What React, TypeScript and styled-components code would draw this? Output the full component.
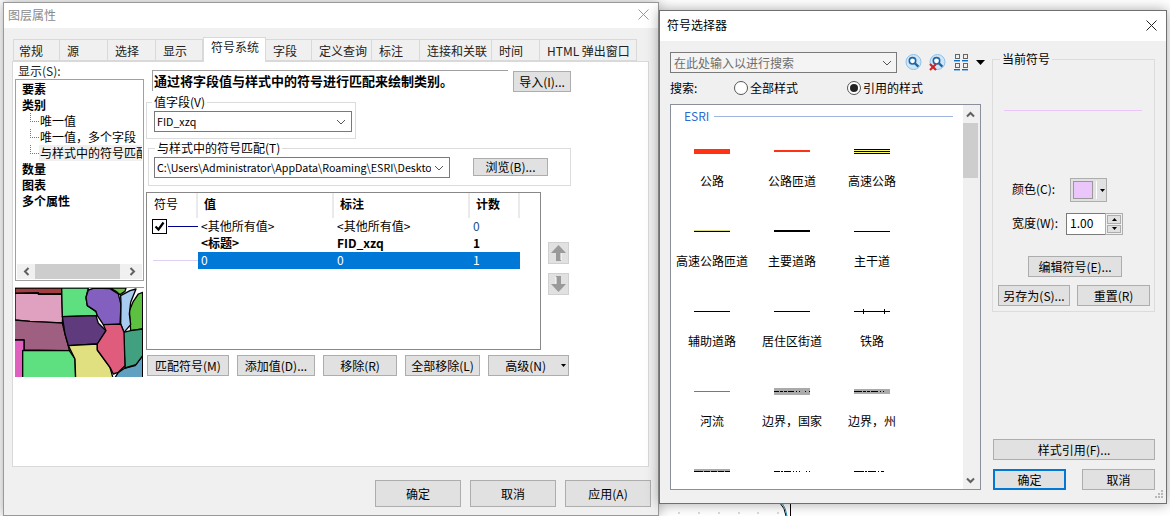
import React from "react";
import styled, { createGlobalStyle } from "styled-components";

// ---------------- Sample Data ----------------
const tabs = [
  { label: "常规", w: 47 },
  { label: "源", w: 48 },
  { label: "选择", w: 48 },
  { label: "显示", w: 47 },
  { label: "符号系统", w: 63, active: true },
  { label: "字段", w: 46 },
  { label: "定义查询", w: 60 },
  { label: "标注", w: 48 },
  { label: "连接和关联", w: 72 },
  { label: "时间", w: 48 },
  { label: "HTML 弹出窗口", w: 97 },
];

type Stroke = { y: number; h: number; color: string; dash?: string };

const symbols: { label: string; strokes: Stroke[]; ticks?: boolean }[] = [
  { label: "公路", strokes: [{ y: 4, h: 5, color: "#ff3314" }] },
  { label: "公路匝道", strokes: [{ y: 5, h: 2, color: "#ff3314" }] },
  {
    label: "高速公路",
    strokes: [
      { y: 4, h: 5, color: "#000" },
      { y: 5, h: 1, color: "#ffff66" },
      { y: 7, h: 1, color: "#ffff66" },
    ],
  },
  {
    label: "高速公路匝道",
    strokes: [
      { y: 5, h: 1, color: "#dddd80" },
      { y: 6, h: 1, color: "#000" },
    ],
  },
  { label: "主要道路", strokes: [{ y: 5, h: 2, color: "#000" }] },
  { label: "主干道", strokes: [{ y: 6, h: 1, color: "#000" }] },
  { label: "辅助道路", strokes: [{ y: 6, h: 1, color: "#000" }] },
  { label: "居住区街道", strokes: [{ y: 6, h: 1, color: "#000" }] },
  { label: "铁路", strokes: [{ y: 6, h: 1, color: "#000" }], ticks: true },
  { label: "河流", strokes: [{ y: 6, h: 1, color: "#2090f0" }] },
  {
    label: "边界，国家",
    strokes: [
      { y: 3, h: 7, color: "#aaa" },
      { y: 6, h: 1, color: "#000", dash: "5 1 3 1 3 1 6 2 1 2 1" },
    ],
  },
  {
    label: "边界，州",
    strokes: [
      { y: 4, h: 5, color: "#aaa" },
      { y: 6, h: 1, color: "#000", dash: "8 1 3 1 3 1 7 2 1 2 1" },
    ],
  },
  {
    label: "",
    strokes: [
      { y: 4, h: 3, color: "#aaa" },
      { y: 6, h: 1, color: "#000", dash: "9 1 6 1 6 1 6 1" },
    ],
  },
  { label: "", strokes: [{ y: 6, h: 1, color: "#000", dash: "6 1 2 1 7 2 1 2 1 2 1" }] },
  { label: "", strokes: [{ y: 6, h: 1, color: "#000", dash: "10 1 2 1 8 2 1 2 3" }] },
];

const regions = [
  { fill: "#6cbf40", d: "300,22 348,22 345,32 330,42 318,32" },
  { fill: "#a23d41", d: "15,22 155,22 155,40 85,40 85,37 15,38" },
  { fill: "#e0a0c0", d: "15,38 85,37 85,41 155,40 158,108 157,127 120,125 60,122 15,118" },
  { fill: "#5ee080", d: "155,22 235,22 228,50 232,75 258,92 262,105 157,108" },
  { fill: "#8360c0", d: "235,28 252,22 300,24 325,40 333,72 330,132 280,132 262,105 258,92 232,75 228,50" },
  { fill: "#5cc040", d: "385,40 398,35 398,145 362,150 358,90 370,62" },
  { fill: "#a8ccf0", d: "332,45 360,30 378,25 362,65 358,100 362,132 342,155 332,130 333,72" },
  { fill: "#9e5f80", d: "10,118 60,122 120,125 157,127 165,160 175,195 178,210 42,208 42,178 10,178" },
  { fill: "#5f3b7e", d: "157,108 258,105 265,128 288,150 262,190 175,195 165,160" },
  { fill: "#e060c0", d: "10,178 42,178 42,208 38,210 38,296 10,296" },
  { fill: "#60a0c0", d: "345,262 375,255 398,225 398,291 315,291 325,275" },
  { fill: "#40a080", d: "340,155 362,150 398,145 398,225 378,252 345,262" },
  { fill: "#5ee080", d: "38,210 178,210 195,235 197,296 38,296" },
  { fill: "#e0e080", d: "175,195 262,190 262,208 300,260 310,296 197,296 195,235" },
  { fill: "#e05c7c", d: "280,132 332,130 342,155 345,255 325,275 310,280 300,260 262,208 262,190 288,150" },
];

// ---------------- Small Drawings ----------------
const Chevron = () => (
  <svg width="10" height="6" viewBox="0 0 10 6" style={{ flex: "none" }}>
    <polyline points="1,1 5,5 9,1" fill="none" stroke="#555" strokeWidth="1" />
  </svg>
);

const ScrollArrow = ({ turn }: { turn: number }) => (
  <svg width="9" height="9" viewBox="0 0 9 9" style={{ transform: `rotate(${turn}deg)` }}>
    <polyline points="1,6.5 4.5,3 8,6.5" fill="none" stroke="#606060" strokeWidth="2" />
  </svg>
);

const Caret = ({ size = 5 }: { size?: number }) => (
  <svg width={size} height={Math.ceil(size / 2)} viewBox="0 0 2 1" preserveAspectRatio="none">
    <polygon points="0,0 2,0 1,1" fill="#000" />
  </svg>
);

const MoveArrow = ({ down }: { down?: boolean }) => (
  <svg width="15" height="16" viewBox="0 0 15 16" style={{ transform: down ? "rotate(180deg)" : undefined }}>
    <polygon points="7.5,0 15,8 10,8 10,16 5,16 5,8 0,8" fill="#9a9a9a" />
    <polyline points="10,8 10,15" stroke="#fff" fill="none" />
  </svg>
);

const SearchIcon = ({ clear }: { clear?: boolean }) => (
  <svg width="17" height="17" viewBox="0 0 17 17">
    <circle cx="8.5" cy="8" r="7.5" fill="#cfe6f7" stroke="#8fc0e4" />
    <circle cx="7.5" cy="6.8" r="3.2" fill="#fff" stroke="#1b66a8" strokeWidth="1.6" />
    <line x1="10" y1="9.4" x2="13.4" y2="12.6" stroke="#1b66a8" strokeWidth="2.2" />
    {clear && (
      <g stroke="#c8282c" strokeWidth="2.2">
        <line x1="1" y1="10" x2="7" y2="16" />
        <line x1="7" y1="10" x2="1" y2="16" />
      </g>
    )}
  </svg>
);

const GridIcon = () => (
  <svg width="16" height="17" viewBox="0 0 16 17">
    <g fill="none" stroke="#666">
      <rect x="2.5" y="0.5" width="4" height="4" />
      <rect x="10.5" y="0.5" width="4" height="4" />
      <rect x="2.5" y="9.5" width="4" height="4" />
      <rect x="10.5" y="9.5" width="4" height="4" />
    </g>
    <g fill="#0a6fc2">
      <rect x="1" y="6" width="6" height="1.4" />
      <rect x="9" y="6" width="6" height="1.4" />
      <rect x="1" y="15" width="6" height="1.4" />
      <rect x="9" y="15" width="6" height="1.4" />
    </g>
  </svg>
);

const CloseIcon = ({ color }: { color: string }) => (
  <svg width="11" height="11" viewBox="0 0 11 11">
    <g stroke={color} strokeWidth="1">
      <line x1="0.5" y1="0.5" x2="10.5" y2="10.5" />
      <line x1="10.5" y1="0.5" x2="0.5" y2="10.5" />
    </g>
  </svg>
);

const MapPreview = () => (
  <svg width="128" height="90" viewBox="15 22 384 270" style={{ display: "block" }}>
    {regions.map((r, i) => (
      <polygon key={i} points={r.d} fill={r.fill} stroke="#000" strokeWidth="4" strokeLinejoin="round" />
    ))}
  </svg>
);

const LineSymbol = ({ strokes, ticks }: { strokes: Stroke[]; ticks?: boolean }) => (
  <svg width="36" height="12" viewBox="0 0 36 12" style={{ display: "block" }}>
    {strokes.map((s, i) => (
      <line
        key={i}
        x1="0"
        x2="36"
        y1={s.y + s.h / 2}
        y2={s.y + s.h / 2}
        stroke={s.color}
        strokeWidth={s.h}
        strokeDasharray={s.dash}
      />
    ))}
    {ticks && (
      <g stroke="#000">
        <line x1="9.5" y1="4" x2="9.5" y2="9" />
        <line x1="30.5" y1="4" x2="30.5" y2="9" />
      </g>
    )}
  </svg>
);

// ---------------- Component ----------------
const App: React.FC = () => {
  return (
    <Desktop>
      <GlobalStyle />
      <DesktopBits width="200" height="13" viewBox="0 0 200 13">
        {[18, 38, 58, 78, 97, 117].map((x) => (
          <rect key={x} x={x} y="9" width="2" height="2" fill="#d6e0cc" />
        ))}
        <path d="M120 0 Q125 5 126 13" stroke="#000" fill="none" />
        <path d="M122 0 Q126 5 127 13" stroke="#2090c0" fill="none" />
        <line x1="130.5" y1="0" x2="130.5" y2="13" stroke="#000" />
      </DesktopBits>

      {/* Layer properties */}
      <LayerWindow>
        <TitleBar>
          <TitleText $inactive>图层属性</TitleText>
          <CloseIcon color="#999" />
        </TitleBar>
        <TabStrip>
          {tabs.map((t) => (
            <Tab key={t.label} $w={t.w} $active={t.active}>
              {t.label}
            </Tab>
          ))}
        </TabStrip>
        <TabPanel>
          <LeftColumn>
            <FieldLabel>显示(S):</FieldLabel>
            <Tree>
              <TreeRows>
                <TreeHead>要素</TreeHead>
                <TreeHead>类别</TreeHead>
                <TreeChild>
                  <Connector />
                  <TreeLabel>唯一值</TreeLabel>
                </TreeChild>
                <TreeChild>
                  <Connector />
                  <TreeLabel>唯一值，多个字段</TreeLabel>
                </TreeChild>
                <TreeChild>
                  <Connector />
                  <TreeLabel $selected>与样式中的符号匹配</TreeLabel>
                </TreeChild>
                <TreeHead>数量</TreeHead>
                <TreeHead>图表</TreeHead>
                <TreeHead>多个属性</TreeHead>
              </TreeRows>
              <HScroll>
                <ScrollArrow turn={-90} />
                <HThumb />
                <ScrollArrow turn={90} />
              </HScroll>
            </Tree>
            <MapFrame>
              <MapPreview />
            </MapFrame>
          </LeftColumn>

          <RightColumn>
            <HeadingRow>
              <Heading>通过将字段值与样式中的符号进行匹配来绘制类别。</Heading>
              <ImportButton>导入(I)...</ImportButton>
            </HeadingRow>

            <ValueGroup>
              <GroupLegend>值字段(V)</GroupLegend>
              <Select $w={198}>
                <SelectText>FID_xzq</SelectText>
                <Chevron />
              </Select>
            </ValueGroup>

            <MatchGroup>
              <GroupLegend>与样式中的符号匹配(T)</GroupLegend>
              <MatchRow>
                <Select $w={296}>
                  <SelectText>C:\Users\Administrator\AppData\Roaming\ESRI\Desktop</SelectText>
                  <Chevron />
                </Select>
                <BrowseButton>浏览(B)...</BrowseButton>
              </MatchRow>
            </MatchGroup>

            <TableRow>
              <SymbolTable>
                <HeadCell $first>符号</HeadCell>
                <HeadCell>值</HeadCell>
                <HeadCell>标注</HeadCell>
                <HeadCell>计数</HeadCell>

                <SymbolCell>
                  <CheckBox>
                    <svg width="11" height="11" viewBox="0 0 11 11">
                      <polyline points="1.5,5.5 4.5,8.5 9.5,1.5" fill="none" stroke="#000" strokeWidth="2.2" />
                    </svg>
                  </CheckBox>
                  <SymbolLine $color="#000090" />
                </SymbolCell>
                <Cell>{"<其他所有值>"}</Cell>
                <Cell>{"<其他所有值>"}</Cell>
                <Cell $blue>0</Cell>

                <SymbolCell />
                <Cell $bold>{"<标题>"}</Cell>
                <Cell $bold>FID_xzq</Cell>
                <Cell $bold>1</Cell>

                <SymbolCell>
                  <SymbolLine $color="#e0d0f5" />
                </SymbolCell>
                <Cell $selected>0</Cell>
                <Cell $selected>0</Cell>
                <Cell $selected>1</Cell>
              </SymbolTable>
              <MoveButtons>
                <MoveButton>
                  <MoveArrow />
                </MoveButton>
                <MoveButton>
                  <MoveArrow down />
                </MoveButton>
              </MoveButtons>
            </TableRow>

            <ActionRow>
              <Button $w={82}>匹配符号(M)</Button>
              <Button $w={78}>添加值(D)...</Button>
              <Button $w={74}>移除(R)</Button>
              <Button $w={75}>全部移除(L)</Button>
              <MenuButton $w={81}>
                高级(N)
                <Caret />
              </MenuButton>
            </ActionRow>
          </RightColumn>
        </TabPanel>
        <DialogButtons>
          <Button $w={86} $h={27}>确定</Button>
          <Button $w={86} $h={27}>取消</Button>
          <Button $w={86} $h={27}>应用(A)</Button>
        </DialogButtons>
      </LayerWindow>

      {/* Symbol selector */}
      <SelectorWindow>
        <SelectorTitle>
          <TitleText>符号选择器</TitleText>
          <CloseIcon color="#222" />
        </SelectorTitle>
        <SelectorBody>
          <BrowsePane>
            <SearchRow>
              <SearchCombo>
                <Placeholder>在此处输入以进行搜索</Placeholder>
                <Chevron />
              </SearchCombo>
              <SearchIcon />
              <SearchIcon clear />
              <GridIcon />
              <Caret size={9} />
            </SearchRow>
            <ScopeRow>
              <ScopeLabel>搜索:</ScopeLabel>
              <Radio />
              <ScopeOption>全部样式</ScopeOption>
              <Radio $checked />
              <span>引用的样式</span>
            </ScopeRow>
            <SymbolList>
              <SymbolArea>
                <StyleHeader>
                  ESRI
                  <StyleRule />
                </StyleHeader>
                <SymbolGrid>
                  {symbols.map((s, i) => (
                    <SymbolItem key={i}>
                      <LineSymbol strokes={s.strokes} ticks={s.ticks} />
                      <SymbolName>{s.label}</SymbolName>
                    </SymbolItem>
                  ))}
                </SymbolGrid>
              </SymbolArea>
              <VScroll>
                <ScrollEnd>
                  <ScrollArrow turn={0} />
                </ScrollEnd>
                <VThumb />
                <ScrollEnd $bottom>
                  <ScrollArrow turn={180} />
                </ScrollEnd>
              </VScroll>
            </SymbolList>
          </BrowsePane>

          <CurrentPane>
            <CurrentGroup>
              <GroupLegend>当前符号</GroupLegend>
              <CurrentLine />
              <ColorRow>
                <PropLabel $w={58}>颜色(C):</PropLabel>
                <ColorButton>
                  <ColorSwatch />
                  <ColorDivider />
                  <Caret />
                </ColorButton>
              </ColorRow>
              <WidthRow>
                <PropLabel $w={54}>宽度(W):</PropLabel>
                <WidthInput>1.00</WidthInput>
                <Spinner>
                  <SpinButton>
                    <SpinUp>
                      <Caret />
                    </SpinUp>
                  </SpinButton>
                  <SpinButton>
                    <Caret />
                  </SpinButton>
                </Spinner>
              </WidthRow>
              <EditButton $w={94}>编辑符号(E)...</EditButton>
              <SaveRow>
                <Button $w={72}>另存为(S)...</Button>
                <Button $w={73}>重置(R)</Button>
              </SaveRow>
            </CurrentGroup>
            <StyleButton $w={162}>样式引用(F)...</StyleButton>
            <ConfirmRow>
              <OkButton $w={73}>确定</OkButton>
              <Button $w={73}>取消</Button>
            </ConfirmRow>
          </CurrentPane>
        </SelectorBody>
        <Grip width="9" height="9" viewBox="0 0 9 9">
          {[
            [7, 0],
            [7, 3],
            [4, 3],
            [7, 6],
            [4, 6],
            [1, 6],
          ].map(([x, y]) => (
            <rect key={`${x}-${y}`} x={x} y={y} width="2" height="2" fill="#b8b8b8" />
          ))}
        </Grip>
      </SelectorWindow>
    </Desktop>
  );
};

// ---------------- Styled Components ----------------
const GlobalStyle = createGlobalStyle`
  html, body {
    margin: 0;
    padding: 0;
    background: #fff;
  }
  body {
    font-family: "Noto Sans CJK SC", "Liberation Sans", sans-serif;
    font-size: 12px;
    line-height: 16px;
    color: #000;
  }
  * {
    box-sizing: border-box;
  }
`;

const Desktop = styled.div`
  position: relative;
  width: 1170px;
  height: 516px;
  overflow: hidden;
  background: #fff;
`;

const DesktopBits = styled.svg`
  position: absolute;
  left: 660px;
  top: 503px;
`;

const Win = styled.div`
  position: absolute;
  display: flex;
  flex-direction: column;
  background: #f0f0f0;
  box-shadow: 0 0 12px rgba(0, 0, 0, 0.35);
`;

const LayerWindow = styled(Win)`
  left: 3px;
  top: 2px;
  width: 656px;
  height: 514px;
  border: 1px solid #999;
`;

const SelectorWindow = styled(Win)`
  left: 659px;
  top: 10px;
  width: 508px;
  height: 494px;
  border: 1px solid #707070;
`;

const TitleBar = styled.div`
  display: flex;
  align-items: center;
  justify-content: space-between;
  height: 25px;
  padding: 0 9px 2px 4px;
  background: #fff;
`;

const SelectorTitle = styled(TitleBar)`
  height: 30px;
  padding: 0 9px 2px 7px;
`;

const TitleText = styled.span<{ $inactive?: boolean }>`
  color: ${(p) => (p.$inactive ? "#8a8a8a" : "#000")};
`;

const TabStrip = styled.div`
  display: flex;
  height: 22px;
  margin: 11px 0 0 9px;
  position: relative;
  z-index: 1;
`;

const Tab = styled.div<{ $w: number; $active?: boolean }>`
  width: ${(p) => p.$w}px;
  height: ${(p) => (p.$active ? 25 : 22)}px;
  margin-top: ${(p) => (p.$active ? -2 : 0)}px;
  padding: ${(p) => (p.$active ? 1 : 3)}px 0 0 7px;
  white-space: nowrap;
  color: #222;
  background: ${(p) => (p.$active ? "#fff" : "#f0f0f0")};
  border: 1px solid #d9d9d9;
  border-bottom: ${(p) => (p.$active ? "none" : "1px solid #d9d9d9")};
  border-left: ${(p) => (p.$active ? "1px solid #d9d9d9" : "none")};

  &:first-child {
    padding-left: 5px;
    border-left: 1px solid #d9d9d9;
  }
`;

const TabPanel = styled.div`
  display: flex;
  gap: 2px;
  width: 637px;
  height: 406px;
  margin-left: 8px;
  padding: 1px 0 0 2px;
  background: #fff;
  border: 1px solid #d9d9d9;
`;

const LeftColumn = styled.div`
  width: 129px;
  flex: none;
`;

const FieldLabel = styled.div`
  padding-left: 3px;
  color: #222;
`;

const Tree = styled.div`
  display: flex;
  flex-direction: column;
  height: 202px;
  border: 1px solid #a0a0a0;
`;

const TreeRows = styled.div`
  flex: 1;
  min-height: 0;
  padding: 1px 0 0 6px;
  overflow: hidden;
`;

const TreeHead = styled.div`
  font-weight: 700;
  height: 16px;
`;

const TreeChild = styled.div`
  display: flex;
  height: 16px;
  padding-left: 8px;
  white-space: nowrap;
`;

const Connector = styled.span`
  flex: none;
  width: 9px;
  height: 9px;
  border-left: 1px dotted #777;
  border-bottom: 1px dotted #777;
`;

const TreeLabel = styled.span<{ $selected?: boolean }>`
  padding-left: 1px;
  overflow: hidden;
  width: ${(p) => (p.$selected ? "103px" : "auto")};
  background: ${(p) => (p.$selected ? "#f0f0f0" : "transparent")};
`;

const HScroll = styled.div`
  display: flex;
  align-items: center;
  justify-content: space-between;
  height: 15px;
  margin: 0 1px 1px;
  padding: 0 5px;
  background: #f0f0f0;
`;

const HThumb = styled.div`
  width: 85px;
  height: 15px;
  margin-right: 5px;
  background: #cdcdcd;
`;

const MapFrame = styled.div`
  margin-top: 6px;
  height: 90px;
  border-top: 1px solid #999;
  overflow: hidden;
`;

const RightColumn = styled.div`
  width: 425px;
  flex: none;
`;

const HeadingRow = styled.div`
  display: flex;
  margin: 7px 0 0 6px;
`;

const Heading = styled.div`
  width: 356px;
  height: 21px;
  padding: 2px 0 0 1px;
  font-size: 13px;
  font-weight: 700;
  white-space: nowrap;
  border-top: 1px solid #a0a0a0;
  border-left: 1px solid #a0a0a0;
`;

const Button = styled.div<{ $w: number; $h?: number }>`
  display: flex;
  align-items: center;
  justify-content: center;
  flex: none;
  width: ${(p) => p.$w}px;
  height: ${(p) => p.$h ?? 21}px;
  white-space: nowrap;
  background: #e1e1e1;
  border: 1px solid #adadad;
`;

const ImportButton = styled(Button).attrs({ $w: 58 })`
  margin: 1px 0 0 5px;
`;

const Group = styled.fieldset`
  margin: 0;
  padding: 0;
  border: 1px solid #dcdcdc;
  min-width: 0;
`;

const GroupLegend = styled.legend`
  margin-left: 7px;
  padding: 0 2px;
  height: 14px;
  line-height: 14px;
`;

const ValueGroup = styled(Group)`
  width: 210px;
  height: 44px;
  margin-top: 3px;
  padding: 2px 0 0 7px;

  legend {
    margin-left: -2px;
  }
`;

const MatchGroup = styled(Group)`
  width: 423px;
  height: 45px;
  margin: 2px 0 0 2px;
  padding: 2px 0 0 5px;

  legend {
    margin-left: 1px;
  }
`;

const MatchRow = styled.div`
  display: flex;
`;

const Select = styled.div<{ $w: number }>`
  display: flex;
  align-items: center;
  gap: 3px;
  width: ${(p) => p.$w}px;
  height: 21px;
  padding: 0 5px 0 2px;
  background: #fff;
  border: 1px solid #7a7a7a;
  flex: none;
`;

const SelectText = styled.span`
  flex: 1;
  min-width: 0;
  font-size: 10.7px;
  overflow: hidden;
  white-space: nowrap;
`;

const BrowseButton = styled(Button).attrs({ $w: 75, $h: 18 })`
  margin: 1px 0 0 23px;
`;

const TableRow = styled.div`
  display: flex;
  margin-top: 6px;
`;

const SymbolTable = styled.div`
  display: grid;
  grid-template-columns: 51px 136px 136px 50px;
  grid-auto-rows: 17px;
  grid-template-rows: 25px;
  align-content: start;
  width: 395px;
  height: 158px;
  background: #fff;
  border: 1px solid #888;
`;

const HeadCell = styled.div<{ $first?: boolean }>`
  padding: 3px 0 0 ${(p) => (p.$first ? 7 : 6)}px;
  font-weight: ${(p) => (p.$first ? 400 : 700)};
  border-right: 2px solid #eaeaea;
`;

const SymbolCell = styled.div`
  display: flex;
  align-items: center;
  padding-left: 5px;
`;

const CheckBox = styled.span`
  display: flex;
  align-items: center;
  justify-content: center;
  flex: none;
  width: 15px;
  height: 15px;
  border: 1px solid #000;
`;

const SymbolLine = styled.span<{ $color: string }>`
  flex: 1;
  height: 1px;
  margin-left: 1px;
  background: ${(p) => p.$color};
`;

const Cell = styled.div<{ $bold?: boolean; $selected?: boolean; $blue?: boolean }>`
  padding-left: 3px;
  white-space: nowrap;
  font-weight: ${(p) => (p.$bold ? 700 : 400)};
  color: ${(p) => (p.$selected ? "#fff" : p.$blue ? "#1b4f8f" : "#000")};
  background: ${(p) => (p.$selected ? "#0078d7" : "transparent")};
`;

const MoveButtons = styled.div`
  display: flex;
  flex-direction: column;
  gap: 9px;
  margin: 50px 0 0 7px;
`;

const MoveButton = styled.div`
  display: flex;
  align-items: center;
  justify-content: center;
  width: 21px;
  height: 22px;
  background: #e1e1e1;
  border: 1px solid #d0d0d0;
`;

const ActionRow = styled.div`
  display: flex;
  gap: 8px;
  margin: 5px 0 0 1px;
`;

const MenuButton = styled(Button)`
  justify-content: flex-end;
  gap: 15px;
  padding-right: 2px;
`;

const DialogButtons = styled.div`
  display: flex;
  justify-content: flex-end;
  gap: 9px;
  margin-top: 13px;
  padding-right: 7px;
`;

const SelectorBody = styled.div`
  display: flex;
  gap: 11px;
  padding: 11px 0 0 10px;
`;

const BrowsePane = styled.div`
  width: 311px;
  flex: none;
`;

const SearchRow = styled.div`
  display: flex;
  align-items: center;
  height: 21px;
  gap: 7px;

  & > * {
    flex: none;
  }
`;

const SearchCombo = styled.div`
  display: flex;
  align-items: center;
  justify-content: space-between;
  width: 227px;
  height: 21px;
  margin-right: 1px;
  padding: 0 4px 0 3px;
  background: #f4f4f4;
  border: 1px solid #7a7a7a;
`;

const Placeholder = styled.span`
  color: #6d6d6d;
`;

const ScopeRow = styled.div`
  display: flex;
  align-items: center;
  height: 16px;
  margin-top: 7px;
`;

const ScopeLabel = styled.span`
  width: 64px;
`;

const ScopeOption = styled.span`
  width: 97px;
`;

const Radio = styled.span<{ $checked?: boolean }>`
  display: flex;
  align-items: center;
  justify-content: center;
  flex: none;
  width: 14px;
  height: 14px;
  margin-right: 2px;
  background: #fff;
  border: 1px solid #555;
  border-radius: 50%;

  &::after {
    content: "";
    width: 8px;
    height: 8px;
    border-radius: 50%;
    background: ${(p) => (p.$checked ? "#222" : "transparent")};
  }
`;

const SymbolList = styled.div`
  display: flex;
  height: 386px;
  margin-top: 8px;
  background: #fff;
  border: 1px solid #8a8f9c;
`;

const SymbolArea = styled.div`
  flex: 1;
  min-width: 0;
  overflow: hidden;
`;

const StyleHeader = styled.div`
  display: flex;
  align-items: center;
  gap: 5px;
  height: 30px;
  padding: 0 10px 8px 13px;
  color: #2a6cd0;
`;

const StyleRule = styled.span`
  flex: 1;
  height: 1px;
  background: #a0b4dc;
`;

const SymbolGrid = styled.div`
  display: grid;
  grid-template-columns: repeat(3, 80px);
  grid-auto-rows: 80px;
  padding-left: 1px;
`;

const SymbolItem = styled.div`
  display: flex;
  flex-direction: column;
  align-items: center;
  padding-top: 10px;
`;

const SymbolName = styled.div`
  margin-top: 16px;
  white-space: nowrap;
`;

const VScroll = styled.div`
  display: flex;
  flex-direction: column;
  flex: none;
  width: 17px;
  padding-right: 2px;
  background: #f0f0f0;
`;

const ScrollEnd = styled.div<{ $bottom?: boolean }>`
  display: flex;
  align-items: center;
  justify-content: center;
  height: 18px;
  margin-top: ${(p) => (p.$bottom ? "auto" : 0)};
`;

const VThumb = styled.div`
  height: 55px;
  background: #cdcdcd;
`;

const CurrentPane = styled.div`
  display: flex;
  flex-direction: column;
  width: 163px;
  height: 438px;
`;

const CurrentGroup = styled(Group)`
  height: 260px;
  width: 163px;
`;

const CurrentLine = styled.div`
  height: 1px;
  margin: 44px 12px 0 11px;
  background: #eac6fb;
`;

const ColorRow = styled.div`
  display: flex;
  align-items: center;
  margin-top: 67px;
  padding-left: 19px;
`;

const PropLabel = styled.span<{ $w: number }>`
  width: ${(p) => p.$w}px;
  margin-top: -2px;
  flex: none;
  white-space: nowrap;
`;

const ColorButton = styled.div`
  display: flex;
  align-items: center;
  width: 37px;
  height: 24px;
  padding-left: 2px;
  background: #e1e1e1;
  border: 1px solid #adadad;
`;

const ColorSwatch = styled.span`
  width: 20px;
  height: 18px;
  background: #eac6fb;
  border: 1px solid #999;
`;

const ColorDivider = styled.span`
  width: 1px;
  height: 18px;
  margin: 0 3px;
  background: #fff;
`;

const WidthRow = styled.div`
  display: flex;
  align-items: center;
  margin-top: 11px;
  padding-left: 19px;
`;

const WidthInput = styled.div`
  width: 39px;
  height: 22px;
  padding: 1px 0 0 3px;
  background: #fff;
  border: 1px solid #7a7a7a;
  border-right: none;
`;

const Spinner = styled.div`
  display: flex;
  flex-direction: column;
  gap: 1px;
  width: 18px;
  height: 22px;
  padding: 1px;
  background: #f0f0f0;
  border: 1px solid #adadad;
`;

const SpinButton = styled.div`
  display: flex;
  flex: 1;
  align-items: center;
  justify-content: center;
  background: #e1e1e1;
  border: 1px solid #adadad;
`;

const SpinUp = styled.span`
  display: flex;
  transform: rotate(180deg);
`;

const EditButton = styled(Button)`
  margin: 21px 0 0 35px;
`;

const SaveRow = styled.div`
  display: flex;
  gap: 7px;
  margin-top: 8px;
  padding-left: 5px;
`;

const StyleButton = styled(Button)`
  margin-top: auto;
  margin-left: 1px;
`;

const ConfirmRow = styled.div`
  display: flex;
  justify-content: space-between;
  margin: 9px 0 0 1px;
`;

const OkButton = styled(Button)`
  border: 2px solid #0078d7;
`;

const Grip = styled.svg`
  position: absolute;
  right: 3px;
  bottom: 4px;
`;

export default App;
